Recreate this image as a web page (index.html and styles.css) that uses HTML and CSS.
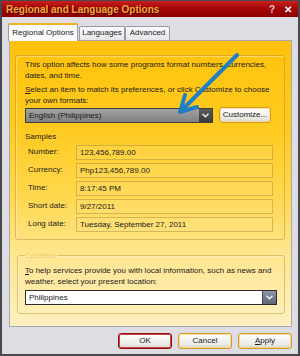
FILE: index.html
```html
<!DOCTYPE html>
<html>
<head>
<meta charset="utf-8">
<link rel="stylesheet" href="styles.css">
</head>
<body>
<div class="window">
  <div class="titlebar">
    <span class="title">Regional and Language Options</span>
    <span class="tbtns"><span class="help">?</span><span class="close">✕</span></span>
  </div>
  <div class="content">
    <div class="tabs">
      <div class="tab active">Regional Options</div>
      <div class="tab">Languages</div>
      <div class="tab">Advanced</div>
    </div>
    <div class="panel">
      <div class="group main">
        <p class="para">This option affects how some programs format numbers, currencies, dates, and time.</p>
        <p class="para p2 acc">Select an item to match its preferences, or click Customize to choose your own formats:</p>
        <div class="formatrow">
          <div class="combo gray"><span class="ctext">English (Philippines)</span><span class="cbtn dark"><svg width="7" height="5" viewBox="0 0 7 5"><path d="M0.5 0.8 L3.5 3.8 L6.5 0.8" fill="none" stroke="#e8e8e8" stroke-width="1.5"/></svg></span></div>
          <div class="btn custom">Customize...</div>
        </div>
        <div class="samples-title">Samples</div>
        <div class="samples">
          <span class="lbl">Number:</span><span class="val">123,456,789.00</span>
          <span class="lbl">Currency:</span><span class="val">Php123,456,789.00</span>
          <span class="lbl">Time:</span><span class="val">8:17:45 PM</span>
          <span class="lbl">Short date:</span><span class="val">9/27/2011</span>
          <span class="lbl">Long date:</span><span class="val">Tuesday, September 27, 2011</span>
        </div>
      </div>
      <fieldset class="group loc">
        <legend class="legend">Location</legend>
        <p class="para acc">To help services provide you with local information, such as news and weather, select your present location:</p>
        <div class="combo white"><span class="ctext">Philippines</span><span class="cbtn blue"><svg width="7" height="5" viewBox="0 0 7 5"><path d="M0.5 0.8 L3.5 3.8 L6.5 0.8" fill="none" stroke="#f0f0f0" stroke-width="1.5"/></svg></span></div>
      </fieldset>
    </div>
    <div class="buttons">
      <div class="btn ok">OK</div>
      <div class="btn">Cancel</div>
      <div class="btn acc">Apply</div>
    </div>
  </div>
  <svg class="arrow" width="300" height="356" viewBox="0 0 300 356">
    <g stroke="#1f7fc4" stroke-width="4" stroke-linecap="round" stroke-linejoin="round" fill="none">
      <path d="M237 55 L181 111"/>
      <path d="M197 107 L180 112 L185 95"/>
    </g>
  </svg>
</div>
</body>
</html>
```
FILE: styles.css
```css
html, body {
  margin: 0;
  padding: 0;
  background: #dcdce2;
}
body {
  font-family: "Liberation Sans", Arial, sans-serif;
  font-size: 8px;
  color: #1a1a1a;
}
.window {
  position: relative;
  width: 300px;
  height: 356px;
  box-sizing: border-box;
  background: #dddde3;
  border: 2px solid #4a4a4e;
  border-top: 1px solid #4a4a4e;
  display: flex;
  flex-direction: column;
  overflow: hidden;
}
.titlebar {
  height: 16px;
  flex: none;
  background: linear-gradient(#c82020 0%, #a80808 40%, #8c0000 100%);
  display: flex;
  align-items: center;
  justify-content: space-between;
  padding: 0 6px 0 4px;
}
.title {
  font-weight: bold;
  font-size: 10px;
  color: #f2a83a;
  text-shadow: 1px 1px 0 #500000;
  white-space: nowrap;
}
.tbtns {
  display: flex;
  align-items: center;
  gap: 9px;
  color: #fff;
  font-weight: bold;
}
.help {
  font-size: 10px;
  color: #e0c8c8;
}
.close {
  font-size: 10px;
}
.content {
  flex: 1;
  display: flex;
  flex-direction: column;
  padding: 6px 6px 0 7px;
}
.tabs {
  display: flex;
  align-items: flex-end;
  height: 17px;
  margin-left: -1px;
  position: relative;
  z-index: 1;
}
.tab {
  box-sizing: border-box;
  height: 14px;
  line-height: 12px;
  text-align: center;
  background: linear-gradient(#fafafc, #e6e6ea);
  border: 1px solid #9a9aa2;
  border-bottom: none;
  border-radius: 2px 2px 0 0;
  font-size: 8px;
}
.tab:nth-child(2) { width: 46px; margin-left: 1px; }
.tab:nth-child(3) { width: 45px; }
.tab.active {
  width: 70px;
  height: 18px;
  line-height: 16px;
  background: #fcfcfd;
  border-top: 2px solid #f2b228;
  margin-bottom: -1px;
}
.panel {
  box-sizing: border-box;
  width: 283px;
  height: 287px;
  flex: none;
  border: 1px solid #a8a8b0;
  background: linear-gradient(#ffc20c 0%, #ffca1e 30%, #ffd850 55%, #ffe690 75%, #fff0c0 100%);
  padding: 14px 0 0 5px;
  display: flex;
  flex-direction: column;
}
.group {
  box-sizing: border-box;
  border: 1px solid rgba(175, 140, 60, 0.45);
  border-radius: 3px;
  box-shadow: inset 1px 1px 0 rgba(255, 255, 255, 0.35);
}
.group.main {
  width: 270px;
  height: 185px;
  flex: none;
  padding: 3px 0 0 9px;
}
.para {
  margin: 0;
  line-height: 11px;
  width: 250px;
}
.acc::first-letter {
  text-decoration: underline;
}
.p2 {
  margin-top: 3px;
}
.formatrow {
  display: flex;
  align-items: center;
  margin-top: 1px;
  gap: 6px;
}
.combo {
  box-sizing: border-box;
  height: 15px;
  display: flex;
  align-items: stretch;
  border: 1px solid #3c3c3c;
}
.combo.gray {
  width: 188px;
  background: linear-gradient(#a2a2a2, #828282);
}
.ctext {
  flex: 1;
  line-height: 13px;
  padding-left: 3px;
}
.cbtn {
  width: 13px;
  display: flex;
  align-items: center;
  justify-content: center;
}
.cbtn.dark {
  background: linear-gradient(#5a5a5a, #3a3a3a);
}
.cbtn.blue {
  background: linear-gradient(#8a96a8, #5c6878);
  border-left: 1px solid #445;
}
.btn {
  box-sizing: border-box;
  width: 54px;
  height: 16px;
  line-height: 14px;
  text-align: center;
  border: 1px solid #d79a1e;
  border-radius: 3px;
  background: linear-gradient(#ffffff, #ecebe6 70%, #d9d6cc);
  box-shadow: inset 0 0 0 1px rgba(255, 210, 120, 0.6);
}
.btn.custom {
  width: 52px;
}
.samples-title {
  margin-top: 8px;
  line-height: 11px;
}
.samples {
  margin-top: 3px;
  display: grid;
  grid-template-columns: 51px 197px;
  grid-auto-rows: 15px;
  row-gap: 3px;
}
.lbl {
  padding-left: 3px;
  line-height: 13px;
}
.val {
  box-sizing: border-box;
  border: 1px solid rgba(160, 130, 60, 0.45);
  background: rgba(255, 235, 150, 0.18);
  padding-left: 3px;
  line-height: 13px;
}
.group.loc {
  margin: 10px 0 0 2px;
  width: 268px;
  height: 64px;
  flex: none;
  padding: 0 0 0 7px;
  min-width: 0;
}
.legend {
  padding: 0 1px;
  margin-left: 0;
  line-height: 11px;
  color: #f0c468;
}
.loc .para {
  margin-top: 4px;
}
.combo.white {
  width: 252px;
  margin-top: 3px;
  background: #ffffff;
  border-color: #2c2c2c;
}
.buttons {
  display: flex;
  justify-content: flex-end;
  gap: 6px;
  margin-top: 6px;
}
.btn.ok {
  border-color: #8a1010;
  box-shadow: inset 0 0 0 1px #c84848;
}
.arrow {
  position: absolute;
  left: -2px;
  top: -1px;
  pointer-events: none;
}
```
